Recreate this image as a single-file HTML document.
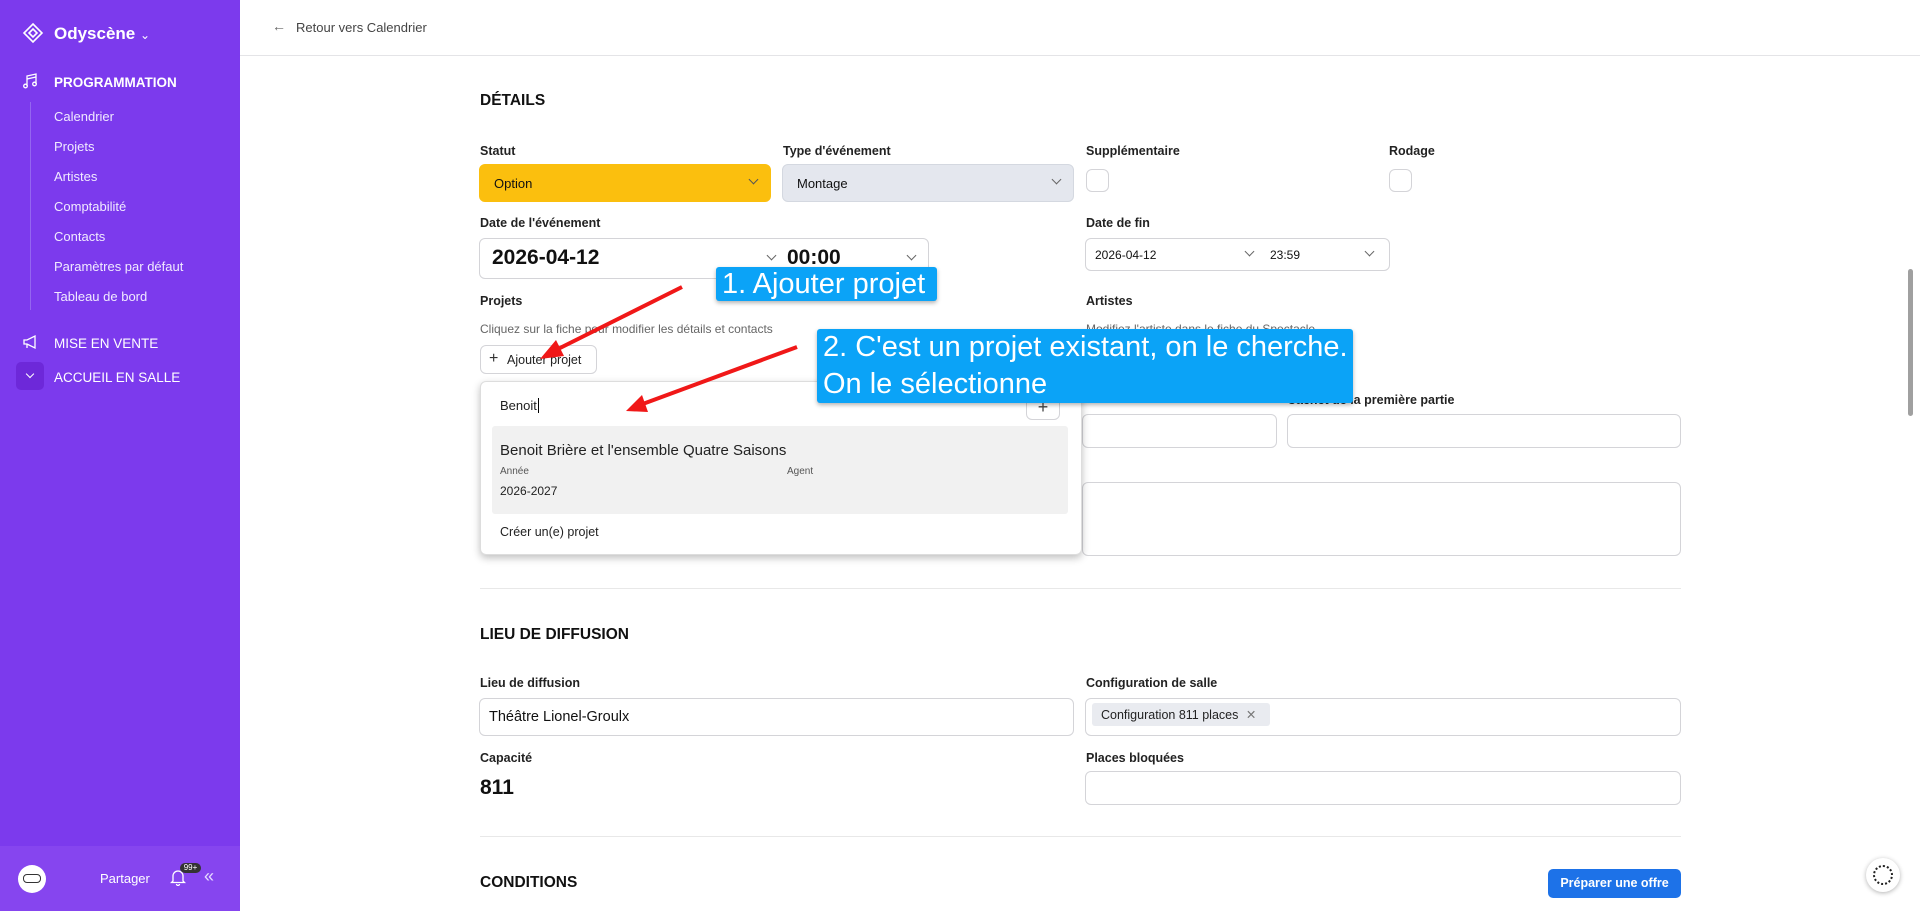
<!DOCTYPE html>
<html><head><meta charset="utf-8"><style>
*{box-sizing:border-box;margin:0;padding:0}
body{width:1920px;height:911px;overflow:hidden;font-family:"Liberation Sans",sans-serif;background:#fff;position:relative;color:#111}
.abs{position:absolute}
.sb{left:0;top:0;width:240px;height:911px;background:#7c3aed;color:#fff}
.sb .it{position:absolute;left:54px;font-size:13px;color:#f1eaff}
.sb .sec{position:absolute;left:54px;font-size:13.5px;font-weight:bold}
.lbl{position:absolute;font-size:12.5px;font-weight:bold;color:#222}
.inp{position:absolute;border:1px solid #d4d4d8;border-radius:6px;background:#fff}
.h{position:absolute;left:480px;font-size:15.5px;font-weight:bold;color:#111}
.hint{position:absolute;font-size:12px;color:#666}
.chev{position:absolute;width:7px;height:7px;border-right:1.5px solid #666;border-bottom:1.5px solid #666;transform:rotate(45deg)}
.call{position:absolute;background:#0ba3f7;color:#fff;font-family:"Liberation Sans Narrow","Liberation Sans",sans-serif;font-size:29px;border-radius:3px;box-shadow:0 2px 4px rgba(0,0,0,.3);padding:0 6px;white-space:nowrap}
</style></head><body>
<div class="abs sb">
<svg class="abs" style="left:22px;top:22px" width="22" height="22" viewBox="0 0 22 22" fill="none" stroke="#fff" stroke-width="1.6"><path d="M11 2L20 11L11 20L2 11Z"/><path d="M11 7L15 11L11 15L7 11Z"/></svg>
<div class="abs" style="left:54px;top:24px;font-size:17px;font-weight:bold">Odyscène <span style="font-weight:normal;font-size:12px">⌄</span></div>
<svg class="abs" style="left:22px;top:73px" width="16" height="16" viewBox="0 0 16 16" fill="none" stroke="#fff" stroke-width="1.3"><path d="M5 13V3l9-2v10"/><circle cx="3.5" cy="13" r="1.8"/><circle cx="12.5" cy="11" r="1.8"/><path d="M5 6l9-2"/></svg>
<div class="sec" style="top:75px">PROGRAMMATION</div>
<div class="abs" style="left:30px;top:102px;width:1px;height:208px;background:#9466f0"></div>
<div class="it" style="top:109px">Calendrier</div>
<div class="it" style="top:139px">Projets</div>
<div class="it" style="top:169px">Artistes</div>
<div class="it" style="top:199px">Comptabilité</div>
<div class="it" style="top:229px">Contacts</div>
<div class="it" style="top:259px">Paramètres par défaut</div>
<div class="it" style="top:289px">Tableau de bord</div>
<svg class="abs" style="left:22px;top:334px" width="16" height="16" viewBox="0 0 16 16" fill="none" stroke="#fff" stroke-width="1.3"><path d="M2 6h3l8-4v12l-8-4H2z"/><path d="M5 10v4"/></svg>
<div class="sec" style="top:336px;font-weight:normal">MISE EN VENTE</div>
<div class="abs" style="left:16px;top:362px;width:28px;height:28px;border-radius:5px;background:#6d28d9"></div>
<div class="chev" style="left:27px;top:371px;border-color:#fff;width:6px;height:6px"></div>
<div class="sec" style="top:370px;font-weight:normal">ACCUEIL EN SALLE</div>
<div class="abs" style="left:0;top:846px;width:240px;height:65px;background:#8645ef"></div>
<div class="abs" style="left:18px;top:865px;width:28px;height:28px;border-radius:50%;background:#fff"></div>
<div class="abs" style="left:23px;top:874px;width:18px;height:9px;border:1.5px solid #333;border-radius:4px"></div>
<div class="abs" style="left:100px;top:871px;font-size:13px">Partager</div>
<svg class="abs" style="left:170px;top:868px" width="16" height="18" viewBox="0 0 16 18" fill="none" stroke="#fff" stroke-width="1.3"><path d="M3 13V8a5 5 0 0110 0v5l1.5 1.5h-13z"/><path d="M6.5 16a1.5 1.5 0 003 0"/></svg>
<div class="abs" style="left:180px;top:863px;width:21px;height:10px;border-radius:5px;background:#333;font-size:8px;text-align:center;line-height:10px">99+</div>
<div class="abs" style="left:204px;top:866px;font-size:18px;color:#e6dcff">«</div>
</div>
<div class="abs" style="left:240px;top:0;width:1680px;height:56px;border-bottom:1px solid #e4e4e7"></div>
<div class="abs" style="left:272px;top:18px;font-size:14px;color:#666">←</div>
<div class="abs" style="left:296px;top:20px;font-size:13px;color:#444">Retour vers Calendrier</div>
<div class="h" style="top:92px">DÉTAILS</div>
<div class="lbl" style="left:480px;top:144px">Statut</div>
<div class="lbl" style="left:783px;top:144px">Type d'événement</div>
<div class="lbl" style="left:1086px;top:144px">Supplémentaire</div>
<div class="lbl" style="left:1389px;top:144px">Rodage</div>
<div class="inp" style="left:479px;top:164px;width:292px;height:38px;background:#fbbf0e;border-color:#fbbf0e"></div>
<div class="abs" style="left:494px;top:176px;font-size:13px">Option</div>
<div class="chev" style="left:750px;top:176px;border-color:#555"></div>
<div class="inp" style="left:782px;top:164px;width:292px;height:38px;background:#e4e7ee;border-color:#d4d8e0"></div>
<div class="abs" style="left:797px;top:176px;font-size:13px">Montage</div>
<div class="chev" style="left:1053px;top:176px"></div>
<div class="inp" style="left:1086px;top:169px;width:23px;height:23px"></div>
<div class="inp" style="left:1389px;top:169px;width:23px;height:23px"></div>
<div class="lbl" style="left:480px;top:216px">Date de l'événement</div>
<div class="lbl" style="left:1086px;top:216px">Date de fin</div>
<div class="inp" style="left:479px;top:238px;width:450px;height:41px"></div>
<div class="abs" style="left:492px;top:246px;font-size:21px;font-weight:bold">2026-04-12</div>
<div class="chev" style="left:768px;top:252px"></div>
<div class="abs" style="left:787px;top:246px;font-size:21px;font-weight:bold">00:00</div>
<div class="chev" style="left:908px;top:252px"></div>
<div class="inp" style="left:1085px;top:238px;width:305px;height:33px"></div>
<div class="abs" style="left:1095px;top:248px;font-size:12px">2026-04-12</div>
<div class="chev" style="left:1246px;top:248px"></div>
<div class="abs" style="left:1270px;top:248px;font-size:12px">23:59</div>
<div class="chev" style="left:1366px;top:248px"></div>
<div class="lbl" style="left:480px;top:294px">Projets</div>
<div class="lbl" style="left:1086px;top:294px">Artistes</div>
<div class="hint" style="left:480px;top:322px">Cliquez sur la fiche pour modifier les détails et contacts</div>
<div class="hint" style="left:1086px;top:322px">Modifiez l'artiste dans le fiche du Spectacle</div>
<div class="inp" style="left:480px;top:345px;width:117px;height:29px"></div>
<div class="abs" style="left:489px;top:350px;font-size:16px;color:#333">+</div>
<div class="abs" style="left:507px;top:353px;font-size:12.5px;color:#222">Ajouter projet</div>
<div class="lbl" style="left:1287px;top:393px">Cachet de la première partie</div>
<div class="inp" style="left:1082px;top:414px;width:195px;height:34px"></div>
<div class="inp" style="left:1287px;top:414px;width:394px;height:34px"></div>
<div class="inp" style="left:1082px;top:482px;width:599px;height:74px"></div>
<div class="abs" style="left:480px;top:381px;width:602px;height:174px;background:#fff;border:1px solid #ddd;border-radius:6px;box-shadow:0 3px 8px rgba(0,0,0,.25)"></div>
<div class="abs" style="left:500px;top:398px;font-size:13px;color:#222">Benoit<span style="border-left:1px solid #000;margin-left:1px"></span></div>
<div class="inp" style="left:1026px;top:394px;width:34px;height:26px;text-align:center;font-size:18px;color:#444;line-height:24px">+</div>
<div class="abs" style="left:492px;top:426px;width:576px;height:88px;background:#f1f1f1;border-radius:3px"></div>
<div class="abs" style="left:500px;top:442px;font-size:15px;color:#222">Benoit Brière et l'ensemble Quatre Saisons</div>
<div class="abs" style="left:500px;top:466px;font-size:10px;color:#555">Année</div>
<div class="abs" style="left:787px;top:466px;font-size:10px;color:#555">Agent</div>
<div class="abs" style="left:500px;top:484px;font-size:12px;color:#222">2026-2027</div>
<div class="abs" style="left:500px;top:525px;font-size:12.5px;color:#222">Créer un(e) projet</div>
<div class="abs" style="left:480px;top:588px;width:1201px;height:1px;background:#e8e8e8"></div>
<div class="h" style="top:626px">LIEU DE DIFFUSION</div>
<div class="lbl" style="left:480px;top:676px">Lieu de diffusion</div>
<div class="lbl" style="left:1086px;top:676px">Configuration de salle</div>
<div class="inp" style="left:479px;top:698px;width:595px;height:38px"></div>
<div class="abs" style="left:489px;top:709px;font-size:14.5px">Théâtre Lionel-Groulx</div>
<div class="inp" style="left:1085px;top:698px;width:596px;height:38px"></div>
<div class="abs" style="left:1092px;top:703px;width:178px;height:23px;background:#e9ebf0;border-radius:3px;font-size:12.5px;padding:4px 9px;color:#222">Configuration 811 places <span style="color:#777;margin-left:4px">✕</span></div>
<div class="lbl" style="left:480px;top:751px">Capacité</div>
<div class="lbl" style="left:1086px;top:751px">Places bloquées</div>
<div class="abs" style="left:480px;top:776px;font-size:21px;font-weight:bold">811</div>
<div class="inp" style="left:1085px;top:771px;width:596px;height:34px"></div>
<div class="abs" style="left:480px;top:836px;width:1201px;height:1px;background:#e8e8e8"></div>
<div class="h" style="top:874px">CONDITIONS</div>
<div class="abs" style="left:1548px;top:869px;width:133px;height:29px;background:#1d72e8;border-radius:5px;color:#fff;font-size:12.5px;font-weight:bold;text-align:center;line-height:29px">Préparer une offre</div>
<div class="abs" style="left:1908px;top:269px;width:5px;height:147px;background:#a0a0a0;border-radius:3px"></div>
<div class="abs" style="left:1866px;top:858px;width:34px;height:34px;border-radius:50%;background:#fff;box-shadow:0 1px 5px rgba(0,0,0,.3)"></div>
<div class="abs" style="left:1873px;top:865px;width:20px;height:20px;border-radius:50%;border:2px dotted #222"></div>
<div class="call" style="left:716px;top:267px;width:221px;height:34px;line-height:34px">1. Ajouter projet</div>
<div class="call" style="left:817px;top:329px;width:536px;height:74px;line-height:37px">2. C'est un projet existant, on le cherche.<br>On le sélectionne</div>
<svg class="abs" style="left:0;top:0" width="1920" height="911"><g stroke="#f01818" stroke-width="4" fill="#f01818"><line x1="682" y1="287" x2="552" y2="352"/><polygon points="540,359 556,340 564,356" stroke="none"/><line x1="797" y1="347" x2="640" y2="405"/><polygon points="626,411 642,395 648,412" stroke="none"/></g></svg>
</body></html>
